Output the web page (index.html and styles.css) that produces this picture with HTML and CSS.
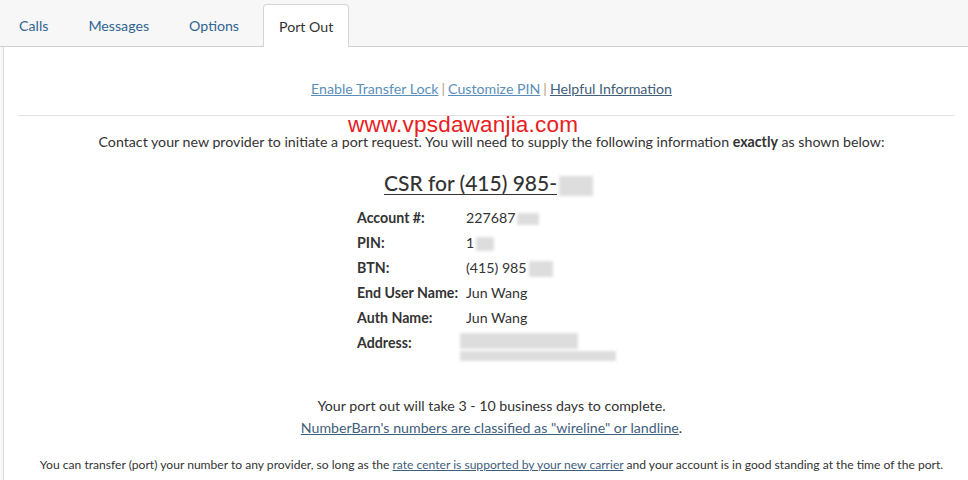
FILE: index.html
```html
<!DOCTYPE html>
<html>
<head>
<meta charset="utf-8">
<link rel="stylesheet" href="styles.css">
</head>
<body>
<div class="tabs">
  <a class="tab">Calls</a>
  <a class="tab">Messages</a>
  <a class="tab">Options</a>
  <a class="tab active">Port Out</a>
</div>
<div class="panel">
  <div class="links">
    <a class="lnk">Enable Transfer Lock</a><span class="sep">|</span><a class="lnk">Customize PIN</a><span class="sep">|</span><a class="lnk dark">Helpful Information</a>
  </div>
  <div class="rule"></div>
  <div class="intro">
    <span class="watermark">www.vpsdawanjia.com</span>
    Contact your new provider to initiate a port request. You will need to supply the following information <b>exactly</b> as shown below:
  </div>
  <h2 class="csr"><span class="csr-text">CSR for (415) 985-</span><span class="blur b-head"></span></h2>
  <div class="grid">
    <div class="lbl">Account #:</div><div class="val">227687<span class="blur b-acc"></span></div>
    <div class="lbl">PIN:</div><div class="val">1<span class="blur b-pin"></span></div>
    <div class="lbl">BTN:</div><div class="val">(415) 985<span class="blur b-btn"></span></div>
    <div class="lbl">End User Name:</div><div class="val">Jun Wang</div>
    <div class="lbl">Auth Name:</div><div class="val">Jun Wang</div>
    <div class="lbl">Address:</div><div class="val addr"><span class="blur b-a1"></span><span class="blur b-a2"></span></div>
  </div>
  <p class="days">Your port out will take 3 - 10 business days to complete.<br><a class="lnk dark">NumberBarn's numbers are classified as "wireline" or landline</a>.</p>
  <p class="small">You can transfer (port) your number to any provider, so long as the <a class="lnk dark">rate center is supported by your new carrier</a> and your account is in good standing at the time of the port.</p>
</div>
</body>
</html>
```
FILE: styles.css
```css
html, body { margin: 0; padding: 0; }
body {
  background: #f7f7f7;
  font-family: Lato, "Liberation Sans", sans-serif;
  color: #333;
  font-size: 14.2px;
  width: 968px;
  height: 480px;
  overflow: hidden;
}
.tabs {
  display: flex;
  height: 46px;
  border-bottom: 1px solid #cfcfcf;
  padding-left: 3px;
  gap: 8px;
  align-items: flex-end;
}
.tab {
  display: block;
  padding: 0 16px;
  height: 42px;
  line-height: 44px;
  color: #2f6592;
  font-size: 14.2px;
  cursor: pointer;
}
.tab.active {
  background: #fff;
  color: #333;
  border: 1px solid #d4d4d4;
  border-bottom: none;
  border-radius: 4px 4px 0 0;
  height: 42px;
  margin-bottom: -1px;
  padding: 0 15px;
}
.panel {
  background: #fff;
  margin-left: 3px;
  border-left: 1px solid #dcdcdc;
  padding: 0 13px 0 14px;
  height: 440px;
}
.links, .intro, .days, .small { padding-left: 10px; }
.links {
  text-align: center;
  padding-top: 32px;
  line-height: 20px;
  height: 20px;
}
.lnk {
  color: #5b8fba;
  text-decoration: underline;
}
.lnk.dark { color: #3f607c; }
.sep { color: #b3a27c; padding: 0 3px; }
.rule {
  margin-top: 16px;
  border-top: 1px solid #e2e2e2;
}
.intro {
  position: relative;
  text-align: center;
  margin-top: 16px;
  line-height: 20px;
}
.intro b { font-weight: 700; }
.watermark {
  position: absolute;
  left: 330px;
  top: -19px;
  color: #e8201c;
  font-family: "Liberation Sans", Arial, sans-serif;
  font-size: 22.5px;
  line-height: 24px;
  letter-spacing: 0.2px;
}
.csr {
  margin: 18px 0 0;
  text-align: center;
  font-size: 21px;
  font-weight: 500;
  line-height: 26px;
  padding-left: 4px;
}
.csr-text { text-decoration: underline; text-underline-offset: 3px; text-decoration-thickness: 1px; }
.blur {
  display: inline-block;
  vertical-align: middle;
  background: #d8d8d8;
  filter: blur(1.5px);
  opacity: 0.85;
}
.b-head { width: 34px; height: 20px; margin-left: 2px; }
.b-acc { width: 22px; height: 12px; margin-left: 2px; }
.b-pin { width: 18px; height: 14px; margin-left: 2px; }
.b-btn { width: 24px; height: 16px; margin-left: 2px; }
.grid {
  display: grid;
  grid-template-columns: 109px auto;
  margin: 12px 0 0 339px;
  width: 320px;
  row-gap: 5px;
}
.lbl { font-weight: 700; line-height: 20px; color: #333; }
.val { line-height: 20px; }
.addr { display: flex; flex-direction: column; gap: 2px; padding-left: 0; }
.b-a1 { width: 118px; height: 16px; margin-left: -6px; }
.b-a2 { width: 156px; height: 10px; margin-left: -6px; }
.days {
  text-align: center;
  margin: 34px 0 0;
  line-height: 22px;
}
.small {
  text-align: center;
  font-size: 12.1px;
  margin: 16px 0 0;
  line-height: 20px;
}
```
